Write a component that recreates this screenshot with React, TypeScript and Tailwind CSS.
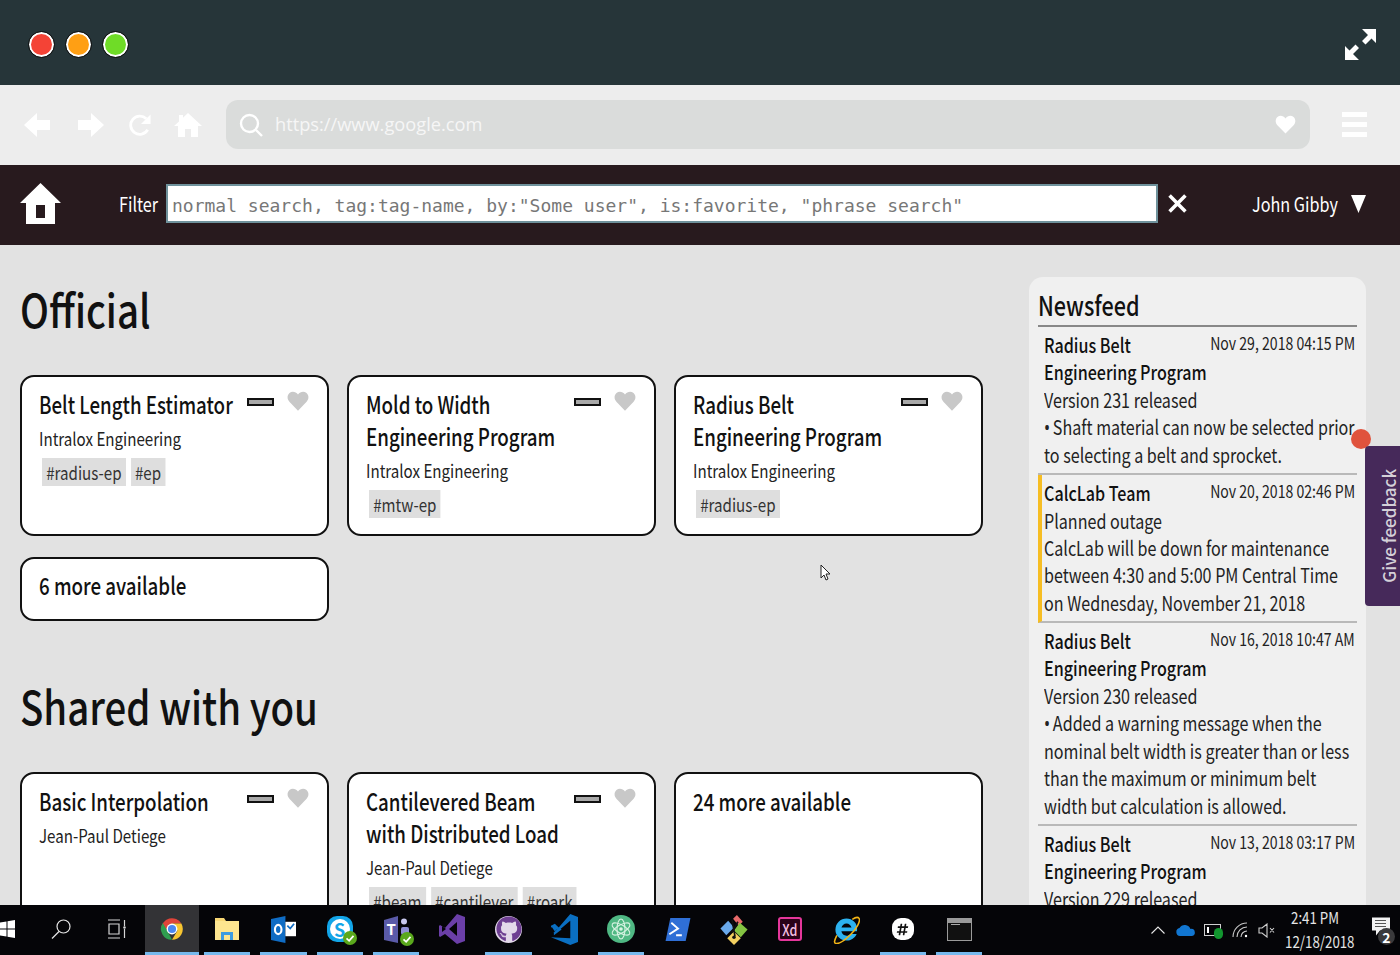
import { FaGithub, FaHashtag } from 'react-icons/fa'

const sans = 'font-["Noto_Sans_CJK_SC","Source_Sans_Pro","Noto_Sans",sans-serif]'

function Heart({ className }: { className: string }) {
  return (
    <svg viewBox="0 0 24 22" className={className} fill="currentColor">
      <path d="M12 21.500 2.600 11.800C-.2 8.900.1 4.600 2.700 2.300 5.400 0 9.600.6 12 4c2.400-3.400 6.600-4 9.300-1.700 2.600 2.300 2.900 6.600.1 9.500z" />
    </svg>
  )
}

function CardActions() {
  return (
    <div className="flex items-start gap-[13px] pt-[2px]">
      <div className="mt-[8px] h-[8px] w-[27px] border-2 border-[#111] bg-[#a9a9a9]" />
      <Heart className="h-[22px] w-[22px] text-[#c8c8c8]" />
    </div>
  )
}

function Card({ title, by, tags }: { title: string[]; by: string; tags: string[] }) {
  return (
    <div className="h-[161px] rounded-[14px] border-2 border-[#111] bg-white pl-[17px] pr-[17px] pt-[11px]">
      <div className="flex">
        <h3 className="w-[208px] shrink-0 text-[24px] leading-[32px] font-medium text-[#111]">
          {title.map((t) => (
            <span key={t} className="block origin-left scale-x-[.78] whitespace-nowrap">{t}</span>
          ))}
        </h3>
        <CardActions />
      </div>
      <p className="mt-[5px] origin-left scale-x-[.84] whitespace-nowrap text-[18px] leading-[26px] text-[#222]">{by}</p>
      {tags.length > 0 && (
        <div className="ml-[3px] mt-[7px] flex origin-left scale-x-[.84] gap-[6px]">
          {tags.map((t) => (
            <span key={t} className="h-[28px] bg-[#dedede] px-[5px] text-[18px] leading-[28px] text-[#333]">
              {t}
            </span>
          ))}
        </div>
      )}
    </div>
  )
}

function MoreCard({ label, tall }: { label: string; tall?: boolean }) {
  return (
    <div
      className={`rounded-[14px] border-2 border-[#111] bg-white pl-[17px] ${tall ? 'h-[161px] pt-[11px]' : 'h-[64px] pt-[10px]'}`}
    >
      <p className="origin-left scale-x-[.78] whitespace-nowrap text-[24px] leading-[32px] font-medium text-[#111]">{label}</p>
    </div>
  )
}

const news = [
  {
    title: ['Radius Belt', 'Engineering Program'],
    date: 'Nov 29, 2018 04:15 PM',
    lines: ['Version 231 released', '• Shaft material can now be selected prior', 'to selecting a belt and sprocket.'],
  },
  {
    title: ['CalcLab Team'],
    date: 'Nov 20, 2018 02:46 PM',
    lines: ['Planned outage', 'CalcLab will be down for maintenance', 'between 4:30 and 5:00 PM Central Time', 'on Wednesday, November 21, 2018'],
    flagged: true,
  },
  {
    title: ['Radius Belt', 'Engineering Program'],
    date: 'Nov 16, 2018 10:47 AM',
    lines: [
      'Version 230 released',
      '• Added a warning message when the',
      'nominal belt width is greater than or less',
      'than the maximum or minimum belt',
      'width but calculation is allowed.',
    ],
  },
  {
    title: ['Radius Belt', 'Engineering Program'],
    date: 'Nov 13, 2018 03:17 PM',
    lines: ['Version 229 released'],
  },
]

function NewsItem({ item }: { item: (typeof news)[number] }) {
  return (
    <div
      className={`relative border-b-2 border-[#b9b9b9] pb-[5px] pr-[2px] pt-[4px] text-[20px] leading-[27.3px] text-[#222] last:border-b-0 ${
        item.flagged ? 'border-l-4 border-l-[#f6bd23] pl-[2px]' : 'pl-[6px]'
      }`}
    >
      <span className="absolute right-[2px] top-[2px] origin-right scale-x-[.805] whitespace-nowrap text-[17.5px] text-[#222]">{item.date}</span>
      {item.title.map((t) => (
        <p key={t} className="origin-left scale-x-[.805] whitespace-nowrap font-medium text-[#111]">{t}</p>
      ))}
      {item.lines.map((l) => (
        <p key={l} className="origin-left scale-x-[.805] whitespace-nowrap">
          {l.startsWith('• ') ? (
            <>
              <span className='inline-block w-[11px] font-["Noto_Sans",sans-serif]'>•</span>
              {l.slice(2)}
            </>
          ) : (
            l
          )}
        </p>
      ))}
    </div>
  )
}

function Chrome() {
  return (
    <svg viewBox="0 0 48 48" className="h-[28px] w-[26px]">
      <path d="M24 24 4 24A20 20 0 0 1 41.300 14L24 14z" fill="#e0443a" />
      <path d="M7 13 17 30 24 44A20 20 0 0 1 7 13z" fill="#2f9e4f" />
      <path d="M41.300 14A20 20 0 0 1 24 44L34 27 24 14z" fill="#f7c531" />
      <circle cx="24" cy="24" r="10" fill="#fff" />
      <circle cx="24" cy="24" r="7.500" fill="#4b87f0" />
    </svg>
  )
}

function Badge() {
  return (
    <svg viewBox="0 0 16 16" className="absolute -bottom-[3px] -right-[4px] h-[14px] w-[14px]">
      <circle cx="8" cy="8" r="8" fill="#5aa81c" />
      <path d="M4 8.500 7 11.200 12 5.500" fill="none" stroke="#fff" strokeWidth="2" />
    </svg>
  )
}

const taskIcons = [
  {
    key: 'files',
    on: true,
    node: (
      <svg viewBox="0 0 26 26" className="h-[26px] w-[26px]">
        <path d="M1 2h9l2 3h13v19H1z" fill="#f7d774" />
        <rect x="1" y="5" width="24" height="19" fill="#fde58f" />
        <path d="M7 24v-8h12v8h-3v-5h-6v5z" fill="#3c9be0" />
      </svg>
    ),
  },
  {
    key: 'outlook',
    on: true,
    node: (
      <svg viewBox="0 0 26 28" className="h-[27px] w-[25px]">
        <path d="M0 3 15 0v28L0 25z" fill="#0f6cc4" />
        <path d="M15 6h11v15H15z" fill="#fff" />
        <path d="M17 10l3 3 4-5" fill="none" stroke="#0f6cc4" strokeWidth="1.800" />
        <ellipse cx="7.500" cy="14" rx="3.400" ry="4.800" fill="none" stroke="#fff" strokeWidth="2.200" />
      </svg>
    ),
  },
  {
    key: 'skype',
    on: true,
    node: (
      <div className="relative flex h-[26px] w-[26px] items-center justify-center rounded-[10px] bg-[#12a5e8]">
        <div className="flex h-[20px] w-[20px] items-center justify-center rounded-full bg-[#fff]">
          <span className="text-[18px] leading-none font-bold text-[#12a5e8]">S</span>
        </div>
        <Badge />
      </div>
    ),
  },
  {
    key: 'teams',
    on: true,
    node: (
      <div className="relative h-[27px] w-[27px]">
        <svg viewBox="0 0 27 27" className="absolute left-0 top-0 h-[27px] w-[27px]">
          <path d="M1 4 15 0v27L1 24z" fill="#5a5aa8" />
          <circle cx="21" cy="5.500" r="3" fill="#c9c9ee" />
          <rect x="18" y="11" width="8" height="8" rx="2" fill="#8f8fd4" />
        </svg>
        <span className="absolute left-[4px] top-[3px] text-[15px] leading-[20px] font-bold text-white">T</span>
        <Badge />
      </div>
    ),
  },
  {
    key: 'vs',
    node: (
      <svg viewBox="0 0 26 30" className="h-[30px] w-[26px]">
        <path d="M18 0 26 3v24l-8 3-12-10-5 3-1-1V12l1-1 5 3z" fill="#6b3fa8" />
        <path d="M18 8 10 15l8 7z" fill="#050508" />
        <path d="M3 12 7 15 3 18z" fill="#050508" />
      </svg>
    ),
  },
  {
    key: 'github',
    on: true,
    node: (
      <div className="flex h-[27px] w-[27px] items-center justify-center rounded-full bg-[#e3d9ea]">
        <FaGithub className="h-[26px] w-[26px] text-[#6e3f92]" />
      </div>
    ),
  },
  {
    key: 'vscode',
    node: (
      <svg viewBox="0 0 28 32" className="h-[31px] w-[27px]">
        <path d="M20 0 28 3v26l-8 3L0 24l20 1V7L8 17 3 13 0 14v-2l8 2z" fill="#0a6fc2" />
        <path d="M0 12l4-2 4 4-4 4z" fill="#0a6fc2" />
        <path d="M3 19l5-5 3 2-8 6z" fill="#0a6fc2" />
      </svg>
    ),
  },
  {
    key: 'atom',
    on: true,
    node: (
      <svg viewBox="0 0 28 28" className="h-[28px] w-[28px]">
        <circle cx="14" cy="14" r="14" fill="#4fb883" />
        <g fill="none" stroke="#d8f3e3" strokeWidth="1.100">
          <ellipse cx="14" cy="14" rx="4" ry="10" />
          <ellipse cx="14" cy="14" rx="4" ry="10" transform="rotate(60 14 14)" />
          <ellipse cx="14" cy="14" rx="4" ry="10" transform="rotate(120 14 14)" />
        </g>
        <circle cx="14" cy="14" r="1.800" fill="#d8f3e3" />
      </svg>
    ),
  },
  {
    key: 'powershell',
    node: (
      <svg viewBox="0 0 26 24" className="h-[23px] w-[26px]">
        <path d="M5 0h21l-5 24H0z" fill="#2f6fd6" />
        <path d="M6 5l7 6-9 6M11 18h6" fill="none" stroke="#fff" strokeWidth="2" />
      </svg>
    ),
  },
  {
    key: 'gitkraken',
    node: (
      <svg viewBox="0 0 28 32" className="h-[31px] w-[28px]">
        <path d="M13 5 17 1l6 7-4 4z" fill="#e86a6a" />
        <path d="M8 7 0 15l6 7 8-8z" fill="#6aa9ea" />
        <path d="M20 9l8 7-7 8-7-7z" fill="#84c442" />
        <path d="M14 18l7 7-7 7-7-7z" fill="#f3d060" />
        <path d="M12 6l3 17M18 8l-6 11" stroke="#111" strokeWidth="1.700" fill="none" />
        <circle cx="14" cy="24" r="1.800" fill="#111" />
      </svg>
    ),
  },
  {
    key: 'xd',
    node: (
      <div className="flex h-[24px] w-[24px] items-center justify-center rounded-[3px] border-2 border-[#e5379b] bg-[#2a0318] text-[16px] leading-none font-medium text-[#f4bfe0]">
        <span className="scale-x-[.78]">Xd</span>
      </div>
    ),
  },
  {
    key: 'ie',
    node: (
      <svg viewBox="0 0 28 30" className="h-[29px] w-[27px]">
        <path d="M14 3.500a11.500 11.500 0 0 0 0 23c4.800 0 8.800-2.900 10.500-6.900h-6.600c-.9 1.200-2.300 1.800-3.900 1.800-2.700 0-4.800-1.800-5.300-4.500h16.100c.1-.6.200-1.200.2-1.900C25.500 8.600 20.400 3.500 14 3.500zm-5.200 9.400c.6-2.400 2.700-4.200 5.200-4.200s4.600 1.800 5.200 4.200z" fill="#2cb2ef" />
        <path d="M4 21C1 27 1 29 3 29.500c3 .5 9-3 15-9s11-14 9-17c-1-1.500-4-1-7 1" fill="none" stroke="#f2b416" strokeWidth="1.600" />
      </svg>
    ),
  },
  {
    key: 'slack',
    on: true,
    node: (
      <div className="flex h-[22px] w-[22px] items-center justify-center rounded-[9px] bg-white">
        <FaHashtag className="h-[13px] w-[13px] text-[#111]" />
      </div>
    ),
  },
  {
    key: 'terminal',
    on: true,
    node: (
      <div className="h-[23px] w-[25px] border border-[#9a9a9a] bg-[#111]">
        <div className="h-[4px] bg-[#9a9a9a]" />
        <div className="ml-[3px] mt-[1px] h-[1px] w-[9px] bg-[#aaa]" />
      </div>
    ),
  },
]

function Taskbar() {
  return (
    <div className="absolute bottom-0 left-0 flex h-[50px] w-full items-stretch bg-[#050508] text-white">
      <div className="flex w-[33px] items-center pb-[2px]">
        <svg viewBox="0 0 15 18" className="h-[18px] w-[15px]" fill="#fff">
          <path d="M0 2.500 6.500 1.500V8.500H0zM7.500 1.300 15 0V8.500H7.500zM0 9.500H6.500V16.500L0 15.500zM7.500 9.500H15V18L7.500 16.700z" />
        </svg>
      </div>
      <div className="flex w-[56px] items-center justify-center pb-[2px]">
        <svg viewBox="0 0 20 20" className="h-[20px] w-[20px]" fill="none" stroke="#e6e6e6" strokeWidth="1.200">
          <circle cx="12.500" cy="7.500" r="6.500" />
          <path d="M8 12.500 1 19.500" />
        </svg>
      </div>
      <div className="flex w-[56px] items-center justify-center pb-[2px]">
        <svg viewBox="0 0 20 20" className="h-[20px] w-[20px]" fill="none" stroke="#d6d6d6" strokeWidth="1.200">
          <path d="M1 1h12M1 19h12M2 5h10v10H2zM17.500 1v6M17.500 10v9" />
          <circle cx="17.500" cy="8.500" r=".7" fill="#d6d6d6" />
        </svg>
      </div>
      <div className="relative flex w-[54px] items-center justify-center bg-[#333336] pb-[2px]">
        <Chrome />
        <div className="absolute bottom-0 left-0 h-[3px] w-full bg-[#76b9ed]" />
      </div>
      <div className="flex">
        {taskIcons.map((i) => (
          <div key={i.key} className="relative flex w-[56.3px] items-center justify-center pb-[2px]">
            {i.node}
            {i.on && <div className="absolute bottom-0 left-[5px] right-[5px] h-[3px] bg-[#76b9ed]" />}
          </div>
        ))}
      </div>
      <div className="ml-auto flex items-center">
        <svg viewBox="0 0 14 8" className="mr-[11px] h-[8px] w-[14px]" fill="none" stroke="#e8e8e8" strokeWidth="1.100">
          <path d="M.5 7.500 7 1l6.500 6.500" />
        </svg>
        <svg viewBox="0 0 20 12" className="mr-[8px] h-[12px] w-[20px]" fill="#1176d1">
          <path d="M4 12a4 4 0 0 1-.5-7.900A6 6 0 0 1 14.500 5 3.500 3.500 0 0 1 16 12z" />
        </svg>
        <div className="relative mr-[11px] h-[12px] w-[17px] border border-[#cfcfcf]">
          <div className="ml-[2px] mt-[2px] h-[6px] w-[2px] bg-white" />
          <div className="absolute -bottom-[4px] -right-[3px] h-[11px] w-[9px] rounded-full bg-[#12962f]" />
        </div>
        <svg viewBox="0 0 16 16" className="mr-[10px] h-[16px] w-[16px]" fill="none" stroke="#c9c9c9" strokeWidth="1.100">
          <path d="M1 15A14 14 0 0 1 15 1M5 15A10 10 0 0 1 15 5M9 15A6 6 0 0 1 15 9" />
          <circle cx="14" cy="14" r="1.200" fill="#fff" stroke="none" />
        </svg>
        <svg viewBox="0 0 17 15" className="mr-[4px] h-[15px] w-[17px]" fill="none" stroke="#d0d0d0" strokeWidth="1.100">
          <path d="M1 5h3l5-4v13l-5-4H1zM12 5l4 4.500M16 5l-4 4.500" />
        </svg>
        <div className="w-[72px] whitespace-nowrap pb-[2px] text-center text-[16px] leading-[24px] text-[#e6e6e6]">
          <p className="scale-x-[.83]">2:41 PM</p>
          <p className="scale-x-[.83]">12/18/2018</p>
        </div>
        <div className="relative ml-[21px] mr-[6px] h-[30px] w-[22px]">
          <svg viewBox="0 0 18 18" className="absolute left-0 top-[2px] h-[19px] w-[18px]" fill="#f2f2f2">
            <path d="M0 0h18v13H8l-4 5v-5H0z" />
            <path d="M3 3h11M3 6h11M3 9h11" stroke="#555" strokeWidth="1" />
          </svg>
          <div className="absolute -right-[1px] bottom-0 flex h-[17px] w-[17px] items-center justify-center rounded-full bg-[#3a3a3c] text-[14px] leading-none font-bold text-white">
            2
          </div>
        </div>
      </div>
    </div>
  )
}

export default function App() {
  return (
    <div className={`relative h-[955px] w-[1400px] overflow-hidden bg-[#e2e2e2] ${sans}`}>
      <header className="flex h-[85px] items-center justify-between bg-[#263539] pl-[29px] pr-[24px] pt-[4px]">
        <div className="flex gap-[12px]">
          <div className="h-[25px] w-[25px] rounded-full border-2 border-white bg-[#f44336] outline outline-1 outline-[#111]" />
          <div className="h-[25px] w-[25px] rounded-full border-2 border-white bg-[#ff9f14] outline outline-1 outline-[#111]" />
          <div className="h-[25px] w-[25px] rounded-full border-2 border-white bg-[#6fdc27] outline outline-1 outline-[#111]" />
        </div>
        <svg viewBox="0 0 31 31" className="h-[31px] w-[31px]" fill="#fff" stroke="#fff">
          <path d="M17 0h14v14l-4.500-4.500-6 6-3.500-3.500 6-6z" stroke="none" />
          <path d="M14 31H0V17l4.500 4.500 6-6 3.500 3.500-6 6z" stroke="none" />
        </svg>
      </header>

      <div className="flex h-[80px] items-center bg-[#ededed] pb-[1px] pl-[24px] pr-[33px] text-white">
        <svg viewBox="0 0 26 24" className="h-[24px] w-[26px]" fill="currentColor">
          <path d="M0 12 13 0v7h13v10H13v7z" />
        </svg>
        <svg viewBox="0 0 26 24" className="ml-[28px] h-[24px] w-[26px]" fill="currentColor">
          <path d="M26 12 13 0v7H0v10h13v7z" />
        </svg>
        <svg viewBox="0 0 24 24" className="ml-[25px] h-[24px] w-[23px]" fill="none" stroke="currentColor" strokeWidth="3">
          <path d="M19.500 17A9.500 9.500 0 1 1 18 5.500" />
          <path d="M22.500 1v10h-10z" fill="currentColor" stroke="none" />
        </svg>
        <svg viewBox="0 0 28 24" className="ml-[22px] h-[24px] w-[28px]" fill="currentColor">
          <path d="M14 0 28 13h-4v11h-7v-8h-6v8H4V13H0l5-4.600V2h4v2.700z" />
        </svg>
        <div className="ml-[24px] flex h-[49px] flex-1 items-center rounded-[12px] bg-[#dadcdb] pl-[13px] pr-[14px]">
          <svg viewBox="0 0 24 24" className="h-[24px] w-[24px]" fill="none" stroke="currentColor" strokeWidth="2.400">
            <circle cx="10.500" cy="10.500" r="8.500" />
            <path d="M17 17l6 6" />
          </svg>
          <span className='ml-[12px] origin-left scale-x-[.96] font-["Open_Sans",sans-serif] text-[19px] text-[#f6f6f6]'>https://www.google.com</span>
          <Heart className="ml-auto h-[19px] w-[21px]" />
        </div>
        <div className="ml-[32px] flex h-[25px] w-[25px] flex-col justify-between">
          <div className="h-[5px] bg-white" />
          <div className="h-[5px] bg-white" />
          <div className="h-[5px] bg-white" />
        </div>
      </div>

      <nav className="flex h-[80px] items-center bg-[#281a1e] pb-[3px] pl-[20px] text-white">
        <svg viewBox="0 0 41 41" className="h-[41px] w-[41px]" fill="#fff">
          <path fillRule="evenodd" d="M20.500 0 41 20h-6v21H6V20H0zM16 22v13h9V22z" />
        </svg>
        <span className="ml-[58px] w-[40px] origin-left scale-x-[.81] text-[20px] leading-none">Filter</span>
        <div className="ml-[7px] flex h-[39px] w-[992px] items-center border-2 border-[#6f929c] bg-white pl-[4px] pt-[3px]">
          <span className='whitespace-nowrap font-["DejaVu_Sans_Mono",monospace] text-[18px] text-[#777]'>
            normal search, tag:tag-name, by:"Some user", is:favorite, "phrase search"
          </span>
        </div>
        <svg viewBox="0 0 18 18" className="ml-[10px] h-[19px] w-[19px]" fill="none" stroke="#fff" strokeWidth="3.400">
          <path d="M1.500 1.500 16.500 16.500M16.500 1.500 1.500 16.500" />
        </svg>
        <span className="ml-[65px] w-[99px] origin-left scale-x-[.81] whitespace-nowrap text-[20px] leading-none">John Gibby</span>
        <svg viewBox="0 0 15 18" className="h-[18px] w-[15px]" fill="#fff">
          <path d="M0 0h15L7.500 18z" />
        </svg>
      </nav>

      <div className="flex">
        <main className="w-[1029px] pl-[20px]">
          <h1 className="mt-[34px] origin-left scale-x-[.835] whitespace-nowrap text-[46px] leading-[58px] font-medium text-[#111]">Official</h1>
          <div className="mt-[38px] grid w-[963px] grid-cols-[309px_309px_309px] gap-x-[18px] gap-y-[21px]">
            <Card title={['Belt Length Estimator']} by="Intralox Engineering" tags={['#radius-ep', '#ep']} />
            <Card title={['Mold to Width', 'Engineering Program']} by="Intralox Engineering" tags={['#mtw-ep']} />
            <Card title={['Radius Belt', 'Engineering Program']} by="Intralox Engineering" tags={['#radius-ep']} />
            <MoreCard label="6 more available" />
          </div>
          <h1 className="mt-[55px] origin-left scale-x-[.835] whitespace-nowrap text-[46px] leading-[58px] font-medium text-[#111]">Shared with you</h1>
          <div className="mt-[38px] grid w-[963px] grid-cols-[309px_309px_309px] gap-x-[18px]">
            <Card title={['Basic Interpolation']} by="Jean-Paul Detiege" tags={[]} />
            <Card title={['Cantilevered Beam', 'with Distributed Load']} by="Jean-Paul Detiege" tags={['#beam', '#cantilever', '#roark']} />
            <MoreCard label="24 more available" tall />
          </div>
        </main>
        <aside className="mt-[32px] h-[700px] w-[337px] rounded-[14px] bg-[#f0f0f0] pl-[9px] pr-[9px] pt-[11px]">
          <h2 className="border-b-2 border-[#888] pb-[3px] text-[27px] leading-[34px] font-medium text-[#111]">
            <span className="block origin-left scale-x-[.8] whitespace-nowrap">Newsfeed</span>
          </h2>
          {news.map((n) => (
            <NewsItem key={n.date} item={n} />
          ))}
        </aside>
      </div>

      <div className="absolute left-[1351px] top-[429px] h-[20px] w-[20px] rounded-full bg-[#e0533d]" />
      <div className="absolute right-0 top-[446px] flex h-[160px] w-[35px] items-center justify-center rounded-l-[4px] bg-[#46295a] pl-[12px]">
        <span className="-rotate-90 whitespace-nowrap text-[17px] font-medium text-[#d4d0d8]">Give feedback</span>
      </div>
      <svg viewBox="0 0 11 17" className="absolute left-[820px] top-[564px] h-[17px] w-[11px]" fill="#fff" stroke="#222" strokeWidth="1">
        <path d="M1 1v13l3-3 2 5 2-1-2-5h4z" />
      </svg>

      <Taskbar />
    </div>
  )
}
